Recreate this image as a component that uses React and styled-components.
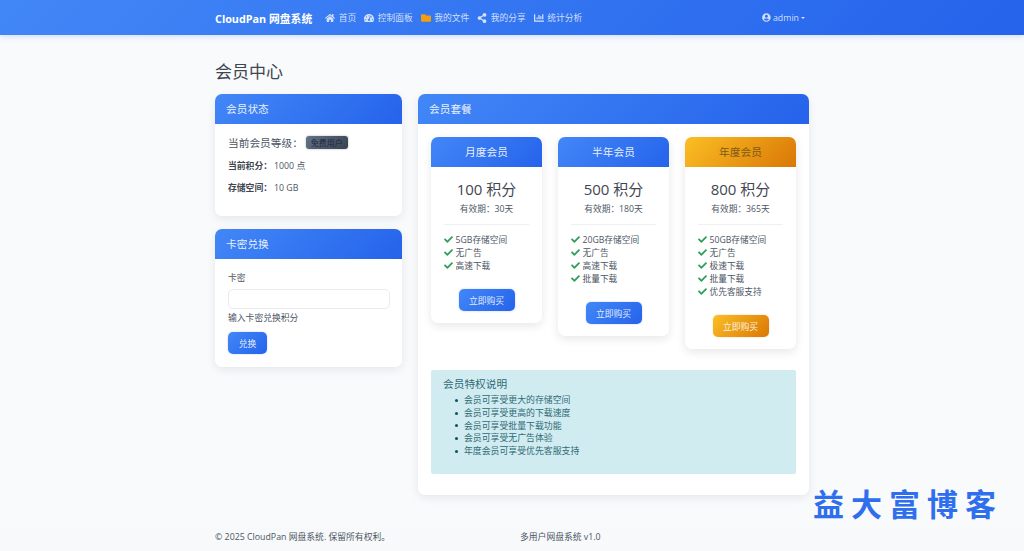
import styled, { createGlobalStyle } from "styled-components";
import {
  FaHome,
  FaTachometerAlt,
  FaFolder,
  FaShareAlt,
  FaChartBar,
  FaUserCircle,
  FaCheck,
} from "react-icons/fa";

const plans = [
  {
    name: "月度会员",
    price: "100 积分",
    days: "有效期：30天",
    perks: ["5GB存储空间", "无广告", "高速下载"],
  },
  {
    name: "半年会员",
    price: "500 积分",
    days: "有效期：180天",
    perks: ["20GB存储空间", "无广告", "高速下载", "批量下载"],
  },
  {
    name: "年度会员",
    price: "800 积分",
    days: "有效期：365天",
    perks: ["50GB存储空间", "无广告", "极速下载", "批量下载", "优先客服支持"],
    gold: true,
  },
];

const notes = [
  "会员可享受更大的存储空间",
  "会员可享受更高的下载速度",
  "会员可享受批量下载功能",
  "会员可享受无广告体验",
  "年度会员可享受优先客服支持",
];

export default function App() {
  return (
    <>
      <GlobalStyle />
      <Navbar>
        <NavInner>
          <Brand>CloudPan 网盘系统</Brand>
          <NavLink>
            <FaHome /> 首页
          </NavLink>
          <NavLink>
            <FaTachometerAlt /> 控制面板
          </NavLink>
          <NavLink>
            <FaFolder color="#f59e0b" /> 我的文件
          </NavLink>
          <NavLink>
            <FaShareAlt /> 我的分享
          </NavLink>
          <NavLink>
            <FaChartBar /> 统计分析
          </NavLink>
          <UserMenu>
            <FaUserCircle /> admin <Caret />
          </UserMenu>
        </NavInner>
      </Navbar>

      <Main>
        <Title>会员中心</Title>
        <Columns>
          <Sidebar>
            <Card>
              <CardHeader>会员状态</CardHeader>
              <StatusBody>
                <LevelRow>
                  当前会员等级：<Badge>免费用户</Badge>
                </LevelRow>
                <StatRow>
                  <strong>当前积分：</strong>1000 点
                </StatRow>
                <StatRow>
                  <strong>存储空间：</strong>10 GB
                </StatRow>
              </StatusBody>
            </Card>
            <Card>
              <CardHeader>卡密兑换</CardHeader>
              <RedeemBody>
                <FieldLabel htmlFor="card-key">卡密</FieldLabel>
                <CardInput id="card-key" type="text" />
                <Hint>输入卡密兑换积分</Hint>
                <RedeemButton type="button">兑换</RedeemButton>
              </RedeemBody>
            </Card>
          </Sidebar>

          <PlansCard>
            <CardHeader>会员套餐</CardHeader>
            <PlansBody>
              <PlanGrid>
                {plans.map((plan) => (
                  <Plan key={plan.name}>
                    <PlanHeader $gold={plan.gold}>{plan.name}</PlanHeader>
                    <PlanBody>
                      <Price>{plan.price}</Price>
                      <Days>{plan.days}</Days>
                      <Divider />
                      <PerkList>
                        {plan.perks.map((perk) => (
                          <Perk key={perk}>
                            <FaCheck />
                            {perk}
                          </Perk>
                        ))}
                      </PerkList>
                      <BuyButton type="button" $gold={plan.gold}>
                        立即购买
                      </BuyButton>
                    </PlanBody>
                  </Plan>
                ))}
              </PlanGrid>
              <InfoBox>
                <InfoTitle>会员特权说明</InfoTitle>
                <InfoList>
                  {notes.map((note) => (
                    <li key={note}>{note}</li>
                  ))}
                </InfoList>
              </InfoBox>
            </PlansBody>
          </PlansCard>
        </Columns>
      </Main>

      <Footer>
        <FooterInner>
          <FooterCol>© 2025 CloudPan 网盘系统. 保留所有权利。</FooterCol>
          <FooterCol $right>多用户网盘系统 v1.0</FooterCol>
        </FooterInner>
      </Footer>
      <Watermark>益大富博客</Watermark>
    </>
  );
}

const blueGradient = "linear-gradient(135deg, #4287f7, #2563eb)";
const goldGradient = "linear-gradient(135deg, #fbbf24, #d97706)";

const GlobalStyle = createGlobalStyle`
  html, body {
    margin: 0;
    padding: 0;
    height: 551px;
    overflow: hidden;
    background: #f8fafc;
    color: #4b5563;
    font-family: "Open Sans", "Noto Sans CJK SC", sans-serif;
    font-size: 8.8px;
  }
  * {
    box-sizing: border-box;
  }
`;

const Navbar = styled.nav`
  height: 35px;
  background: ${blueGradient};
  box-shadow: 0 1px 6px rgba(37, 99, 235, 0.22);
`;

const NavInner = styled.div`
  width: 594px;
  height: 100%;
  margin: 0 auto;
  display: flex;
  align-items: center;
  color: rgba(255, 255, 255, 0.78);
`;

const Brand = styled.div`
  color: #fff;
  font-size: 10.8px;
  font-weight: 700;
  margin-right: 13px;
  white-space: nowrap;
`;

const NavLink = styled.a`
  display: flex;
  align-items: center;
  gap: 3.5px;
  margin-right: 8px;
  font-size: 8.75px;
  white-space: nowrap;

  svg {
    width: auto;
    height: 10px;
  }
`;

const UserMenu = styled.div`
  margin-left: auto;
  margin-right: 4px;
  display: flex;
  align-items: center;
  gap: 2px;
  font-size: 8.8px;
`;

const Caret = styled.span`
  width: 0;
  height: 0;
  border-left: 2.5px solid transparent;
  border-right: 2.5px solid transparent;
  border-top: 2.5px solid rgba(255, 255, 255, 0.8);
`;

const Main = styled.main`
  width: 594px;
  margin: 0 auto;
  height: 486px;
`;

const Title = styled.h1`
  margin: 0;
  padding-top: 25px;
  height: 59px;
  font-size: 17px;
  line-height: 24px;
  font-weight: 400;
  color: #3f4652;
`;

const Columns = styled.div`
  display: flex;
  align-items: flex-start;
  gap: 16px;
`;

const Sidebar = styled.div`
  width: 187px;
  display: flex;
  flex-direction: column;
  gap: 13px;
`;

const Card = styled.section`
  background: #fff;
  border-radius: 7px;
  overflow: hidden;
  box-shadow: 0 3px 10px rgba(15, 23, 42, 0.08);
`;

const PlansCard = styled(Card)`
  flex: 1;
  height: 401px;
`;

const CardHeader = styled.header`
  height: 30px;
  padding: 0 0 2px 11px;
  display: flex;
  align-items: center;
  background: ${blueGradient};
  color: rgba(255, 255, 255, 0.9);
  font-size: 10.7px;
`;

const StatusBody = styled.div`
  height: 92px;
  padding: 10px 13px 0;
`;

const LevelRow = styled.div`
  display: flex;
  align-items: center;
  height: 16px;
  font-size: 10.7px;
  margin-bottom: 9px;
`;

const Badge = styled.span`
  margin: 1px 0 0 3px;
  width: 42px;
  height: 13px;
  border-radius: 3px;
  background: linear-gradient(135deg, #64748b, #374151);
  box-shadow: 0 0 2px rgba(30, 41, 59, 0.4);
  color: #1f2937;
  font-size: 8px;
  line-height: 13px;
  text-align: center;
`;

const StatRow = styled.div`
  height: 22px;
  line-height: 14px;
  font-size: 8.8px;

  strong {
    display: inline-block;
    width: 46px;
    font-weight: 700;
    color: #3f4652;
  }
`;

const RedeemBody = styled.div`
  height: 108px;
  padding: 13px 13px 0;
  display: flex;
  flex-direction: column;
  align-items: flex-start;
`;

const FieldLabel = styled.label`
  height: 13px;
  line-height: 13px;
  margin-bottom: 4px;
`;

const CardInput = styled.input`
  width: 162px;
  height: 20px;
  padding: 0 6px;
  background: #fff;
  border: 1.5px solid #e8eaed;
  border-radius: 5px;
  outline: none;
`;

const Hint = styled.div`
  height: 13px;
  line-height: 13px;
  margin: 3px 0 7px;
`;

const ActionButton = styled.button`
  border: 0;
  padding: 0;
  border-radius: 5px;
  background: ${(p) => (p.$gold ? goldGradient : blueGradient)};
  color: rgba(255, 255, 255, 0.88);
  font-family: inherit;
  font-size: 8.8px;
  box-shadow: 0 0 2px ${(p) => (p.$gold ? "rgba(217, 119, 6, 0.35)" : "rgba(37, 99, 235, 0.35)")};
`;

const RedeemButton = styled(ActionButton)`
  width: 39px;
  height: 22px;
`;

const PlansBody = styled.div`
  padding: 13px;
`;

const PlanGrid = styled.div`
  display: flex;
  align-items: flex-start;
  gap: 16px;
  height: 233px;
`;

const Plan = styled.article`
  width: 111px;
  background: #fff;
  border-radius: 7px;
  overflow: hidden;
  box-shadow: 0 3px 10px rgba(15, 23, 42, 0.1);
`;

const PlanHeader = styled.header`
  height: 30px;
  padding-bottom: 1px;
  display: flex;
  align-items: center;
  justify-content: center;
  background: ${(p) => (p.$gold ? goldGradient : blueGradient)};
  color: ${(p) => (p.$gold ? "#7c5a17" : "rgba(255, 255, 255, 0.9)")};
  font-size: 10.7px;
`;

const PlanBody = styled.div`
  padding: 11px 13px 12px;
  display: flex;
  flex-direction: column;
  align-items: center;
`;

const Price = styled.div`
  height: 22px;
  line-height: 22px;
  font-size: 15px;
  color: #3f4652;
  white-space: nowrap;
`;

const Days = styled.div`
  height: 13px;
  line-height: 13px;
  margin-top: 3px;
  white-space: nowrap;
  font-size: 8.7px;
`;

const Divider = styled.hr`
  width: 85px;
  height: 1px;
  margin: 8px 0;
  border: 0;
  background: #eef0f2;
`;

const PerkList = styled.ul`
  width: 85px;
  margin: 0 0 17px;
  padding: 0;
  list-style: none;
`;

const Perk = styled.li`
  height: 13px;
  display: flex;
  align-items: center;
  gap: 2.5px;
  font-size: 8.7px;
  white-space: nowrap;

  svg {
    width: 9px;
    height: 9px;
    color: #2f9e5b;
    flex: none;
  }
`;

const BuyButton = styled(ActionButton)`
  width: 56px;
  height: 22px;
`;

const InfoBox = styled.div`
  height: 104px;
  padding: 7px 12px 0;
  border-radius: 2px;
  background: #d1ecf1;
  color: #2f6a75;
`;

const InfoTitle = styled.h5`
  margin: 0;
  height: 15px;
  font-size: 10.7px;
  line-height: 15px;
  font-weight: 400;
`;

const InfoList = styled.ul`
  margin: 2px 0 0;
  padding: 0 0 0 11.5px;
  list-style: none;

  li {
    display: flex;
    align-items: center;
    gap: 6.5px;
    height: 12.8px;
    line-height: 12.8px;
    font-size: 8.9px;
  }

  li::before {
    content: "";
    width: 3px;
    height: 3px;
    border-radius: 50%;
    background: #0c5460;
  }
`;

const Footer = styled.footer`
  height: 30px;
  background: #f8f9fa;
`;

const FooterInner = styled.div`
  width: 594px;
  height: 100%;
  margin: 0 auto;
  display: flex;
  align-items: center;
`;

const FooterCol = styled.div`
  width: 50%;
  padding-left: ${(p) => (p.$right ? "8px" : "0")};
`;

const Watermark = styled.div`
  position: absolute;
  left: 813px;
  top: 484px;
  font-family: "Noto Sans CJK SC", sans-serif;
  font-size: 31px;
  line-height: 38px;
  font-weight: 700;
  letter-spacing: 7px;
  color: #2f6fee;
  white-space: nowrap;
`;
